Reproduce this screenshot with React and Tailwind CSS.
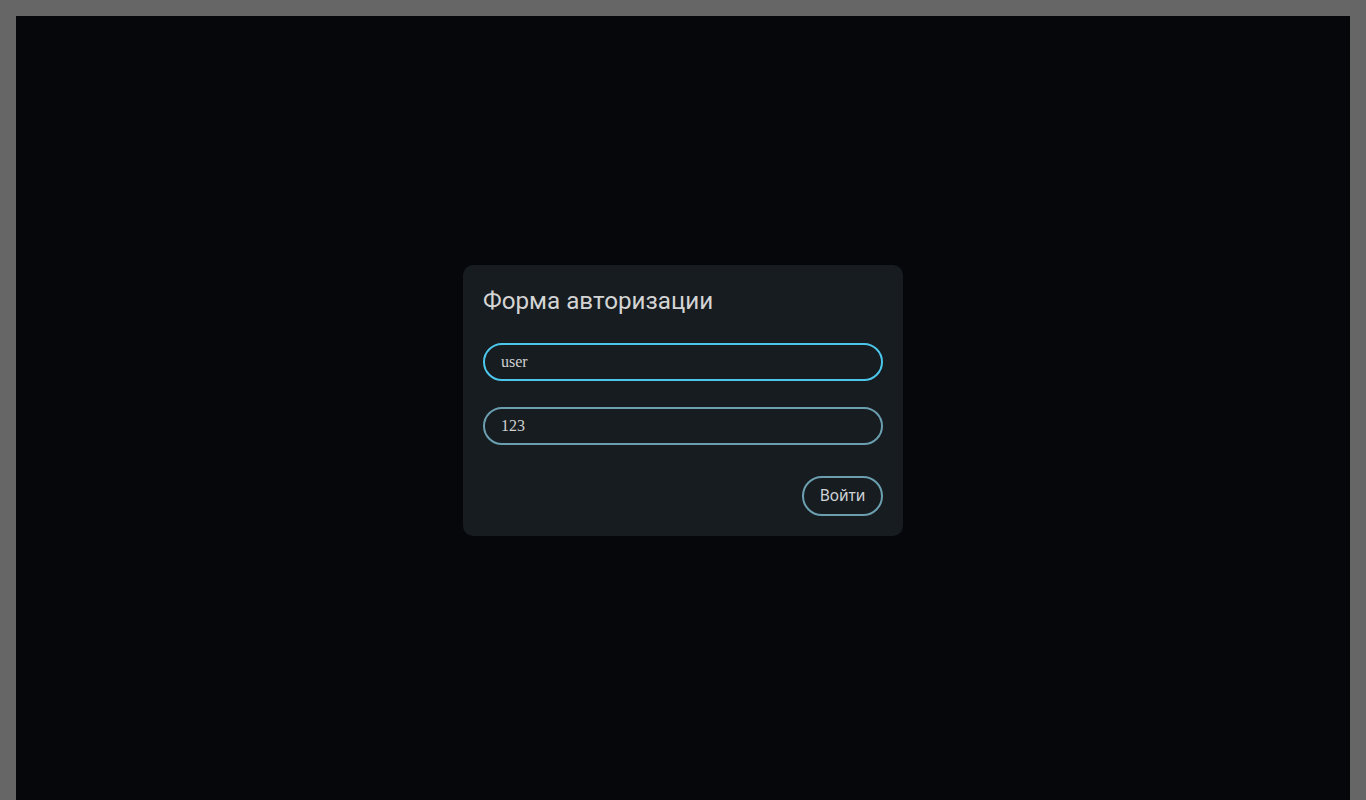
export default function App() {
  return (
    <div className="min-h-screen bg-[#666666] p-4 pb-0">
      <div className="bg-[#05070a] min-h-[784px] flex items-start justify-center pt-[249px]">
        <div className="w-[440px] bg-[#161c20] rounded-[10px] p-5 flex flex-col">
          <h1 className="text-[24.2px] leading-[32px] text-[#d4d4d4] font-normal" style={{ fontFamily: "Roboto, sans-serif" }}>
            Форма авторизации
          </h1>
          <input
            defaultValue="user"
            className="mt-[26px] h-[38px] w-full rounded-full border-2 border-[#4cc6ea] bg-transparent px-4 text-[16px] text-[#d0d0d0] outline-none"
            style={{ fontFamily: "'Liberation Serif', serif" }}
          />
          <input
            defaultValue="123"
            className="mt-[26px] h-[38px] w-full rounded-full border-2 border-[#6b9fb0] bg-transparent px-4 text-[16px] text-[#d0d0d0] outline-none"
            style={{ fontFamily: "'Liberation Serif', serif" }}
          />
          <div className="mt-[31px] flex justify-end">
            <button className="h-10 w-[81px] rounded-full border-2 border-[#6b9fb0] text-[15.5px] text-[#cfd3d6]" style={{ fontFamily: "'Noto Sans', sans-serif" }}>
              Войти
            </button>
          </div>
        </div>
      </div>
    </div>
  );
}
